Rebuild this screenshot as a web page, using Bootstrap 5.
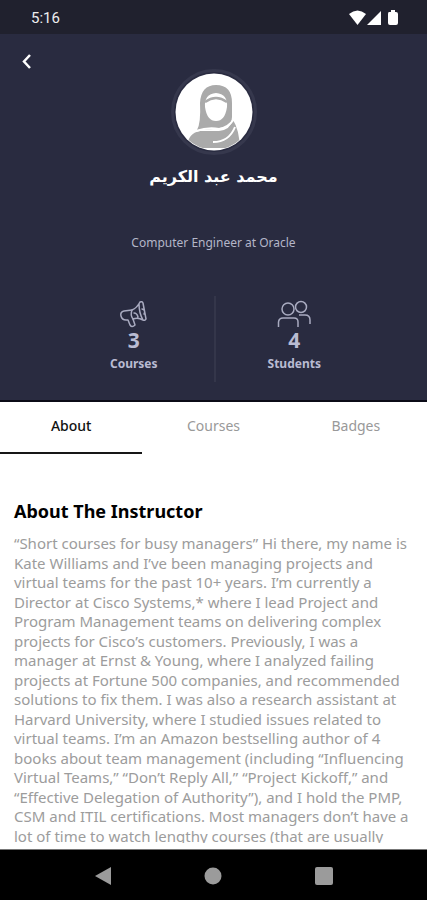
<!DOCTYPE html>
<html lang="en">
<head>
<meta charset="utf-8">
<meta name="viewport" content="width=device-width, initial-scale=1">
<title>Instructor profile</title>
<link href="https://cdn.jsdelivr.net/npm/bootstrap@5.3.0/dist/css/bootstrap.min.css" rel="stylesheet">
<style>
body { font-family: "Noto Sans", "DejaVu Sans", sans-serif; background: #fff; }
.status-bar { background: #20212e; padding: 8px 28px 6px 31px; font: 400 15px/20px Roboto, sans-serif; color: #eee; }
.profile-head { background: #292b40; border-bottom: 2px solid #0b0b17; color: #b9bbd2; padding-bottom: 18px; }
.back-btn { width: 54px; height: 35px; }
.avatar { width: 86px; height: 86px; border: 3px solid #36384d; padding: 1px; }
.avatar svg { width: 78px; height: 78px; }
.person-name { font: 700 16px/28px "DejaVu Sans", sans-serif; color: #fff; margin-top: 8px; }
.job { font-size: 12px; line-height: 20px; margin-top: 42px; color: #b4b6c8; }
.stats { margin-top: 43px; padding: 0 54px; }
.stat { padding: 4px 0 8px; }
.stat + .stat { border-left: 2px solid #34364a; }
.stat-num { font-size: 21px; line-height: 24px; }
.stat-label { font-size: 12px; line-height: 20px; margin-top: 2px; }
.tabs .nav-link { font-size: 14px; line-height: 20px; padding: 14px 0 16px; border-radius: 0; border-bottom: 2px solid transparent; color: #999; }
.tabs .nav-link.active { color: #111; font-weight: 500; border-color: #161616; }
.bio { padding: 43px 14px 0; margin-bottom: 6px; }
.bio h1 { font-size: 18px; line-height: 28px; color: #000; margin-bottom: 9px; }
.bio p { font-size: 15px; line-height: 1.3; color: #9c9c9c; white-space: nowrap; }
.system-nav { background: #000; padding: 12px 48px 14px; border-top: 1px solid #777; }
.system-nav .btn { line-height: 24px; }
</style>
</head>
<body>
<div class="d-flex flex-column vh-100 overflow-hidden">
  <div class="status-bar d-flex align-items-center justify-content-between flex-shrink-0">
    <span>5:16</span>
    <svg width="50" height="18" viewBox="0 0 50 18" fill="#fff" aria-hidden="true">
      <path d="M0 5Q8.500-2 17 5L8.500 16Z"/><path d="M32 2V16H18Z"/><path d="M40 3H42V1H46V3H47Q49 3 49 5V14Q49 16 47 16H41Q39 16 39 14V5Q39 3 40 3Z"/>
    </svg>
  </div>
  <header class="profile-head d-flex flex-column flex-shrink-0 text-center">
    <button class="back-btn btn border-0 p-0 d-flex justify-content-center align-items-end" type="button" aria-label="Back">
      <svg width="10" height="15" viewBox="0 0 10 15" fill="none" stroke="#fff" stroke-width="2.500"><path d="M8 1 2 7.500 8 14"/></svg>
    </button>
    <div class="avatar rounded-circle mx-auto flex-shrink-0 d-flex">
      <svg viewBox="0 0 78 78" aria-hidden="true">
        <defs><clipPath id="disc"><circle cx="39" cy="39" r="38"/></clipPath></defs>
        <circle cx="39" cy="39" r="38.500" fill="#fff"/>
        <g clip-path="url(#disc)">
          <path d="M22 57Q26 50 25 30Q26 12 41 12Q57 12 57 30V44Q57 50 51 54Q37 57 22 57Z" fill="#aaa"/>
          <path d="M30 34Q29 21 41 20Q53 21 52 34Q50 48 41 48Q32 48 30 34Z" fill="#fff"/>
          <path d="M30 29Q41 21 52 29" fill="none" stroke="#aaa" stroke-width="2.500"/>
          <path d="M12 74Q13 60 25 58H44Q55 57 58 47Q64 56 65 75H12Z" fill="#aaa"/>
          <path d="M21 58Q33 54 44 56Q54 54 59 46M38 69Q54 69 60 54" fill="none" stroke="#fff" stroke-width="2"/>
        </g>
      </svg>
    </div>
    <div class="person-name" lang="ar" dir="rtl">محمد عبد الكريم</div>
    <div class="job">Computer Engineer at Oracle</div>
    <div class="stats d-flex">
      <div class="stat flex-fill w-50 d-flex flex-column align-items-center">
        <svg width="28" height="28" viewBox="0 0 28 28" fill="none" stroke="#a9abc0" stroke-width="1.500" stroke-linejoin="round" stroke-linecap="round" aria-hidden="true">
          <path d="M12 10 4 11Q0 12 1 16Q2 20 6 20L8 20 10 25Q12 28 15 25L13 19"/>
          <path d="M12 10Q17 8 20 2Q22 1 23 3L26 19Q25 21 23 20Q18 17 13 19Q10 15 12 10ZM19 4Q19 13 23 20M22 9Q26 10 24 14M14 13Q17 13 18 17"/>
        </svg>
        <strong class="stat-num">3</strong>
        <strong class="stat-label">Courses</strong>
      </div>
      <div class="stat flex-fill w-50 d-flex flex-column align-items-center">
        <svg width="34" height="28" viewBox="0 0 34 28" fill="none" stroke="#a9abc0" stroke-width="1.500" aria-hidden="true">
          <circle cx="11" cy="9" r="6"/><circle cx="24" cy="7" r="5.500"/>
          <path d="M1.500 27V22Q2 18 6 18H17Q21 18 21 22V27M22 15H28Q33 15 33 20V24"/>
        </svg>
        <strong class="stat-num">4</strong>
        <strong class="stat-label">Students</strong>
      </div>
    </div>
  </header>
  <nav class="tabs nav nav-justified flex-shrink-0">
    <a class="nav-link active" href="#about" aria-current="page">About</a>
    <a class="nav-link" href="#courses">Courses</a>
    <a class="nav-link" href="#badges">Badges</a>
  </nav>
  <main class="bio flex-fill overflow-hidden" id="about">
    <h1 class="fw-bold">About The Instructor</h1>
    <p class="mb-0">“Short courses for busy managers” Hi there, my name is<br>
    Kate Williams and I’ve been managing projects and<br>
    virtual teams for the past 10+ years. I’m currently a<br>
    Director at Cisco Systems,* where I lead Project and<br>
    Program Management teams on delivering complex<br>
    projects for Cisco’s customers. Previously, I was a<br>
    manager at Ernst &amp; Young, where I analyzed failing<br>
    projects at Fortune 500 companies, and recommended<br>
    solutions to fix them. I was also a research assistant at<br>
    Harvard University, where I studied issues related to<br>
    virtual teams. I’m an Amazon bestselling author of 4<br>
    books about team management (including “Influencing<br>
    Virtual Teams,” “Don’t Reply All,” “Project Kickoff,” and<br>
    “Effective Delegation of Authority”), and I hold the PMP,<br>
    CSM and ITIL certifications. Most managers don’t have a<br>
    lot of time to watch lengthy courses (that are usually</p>
  </main>
  <div class="system-nav d-flex align-items-center flex-shrink-0">
    <button class="btn border-0 p-0 flex-fill" type="button" aria-label="System back"><svg width="18" height="18" viewBox="0 0 18 18" fill="#9b9b9b"><path d="M17 0V18L1 9Z"/></svg></button>
    <button class="btn border-0 p-0 flex-fill" type="button" aria-label="Home"><svg width="18" height="18" viewBox="0 0 18 18" fill="#9b9b9b"><circle cx="9" cy="9" r="8.500"/></svg></button>
    <button class="btn border-0 p-0 flex-fill" type="button" aria-label="Recent apps"><svg width="18" height="18" viewBox="0 0 18 18" fill="#9b9b9b"><rect width="18" height="18" rx="2"/></svg></button>
  </div>
</div>
<script src="https://cdn.jsdelivr.net/npm/bootstrap@5.3.0/dist/js/bootstrap.bundle.min.js"></script>
</body>
</html>
